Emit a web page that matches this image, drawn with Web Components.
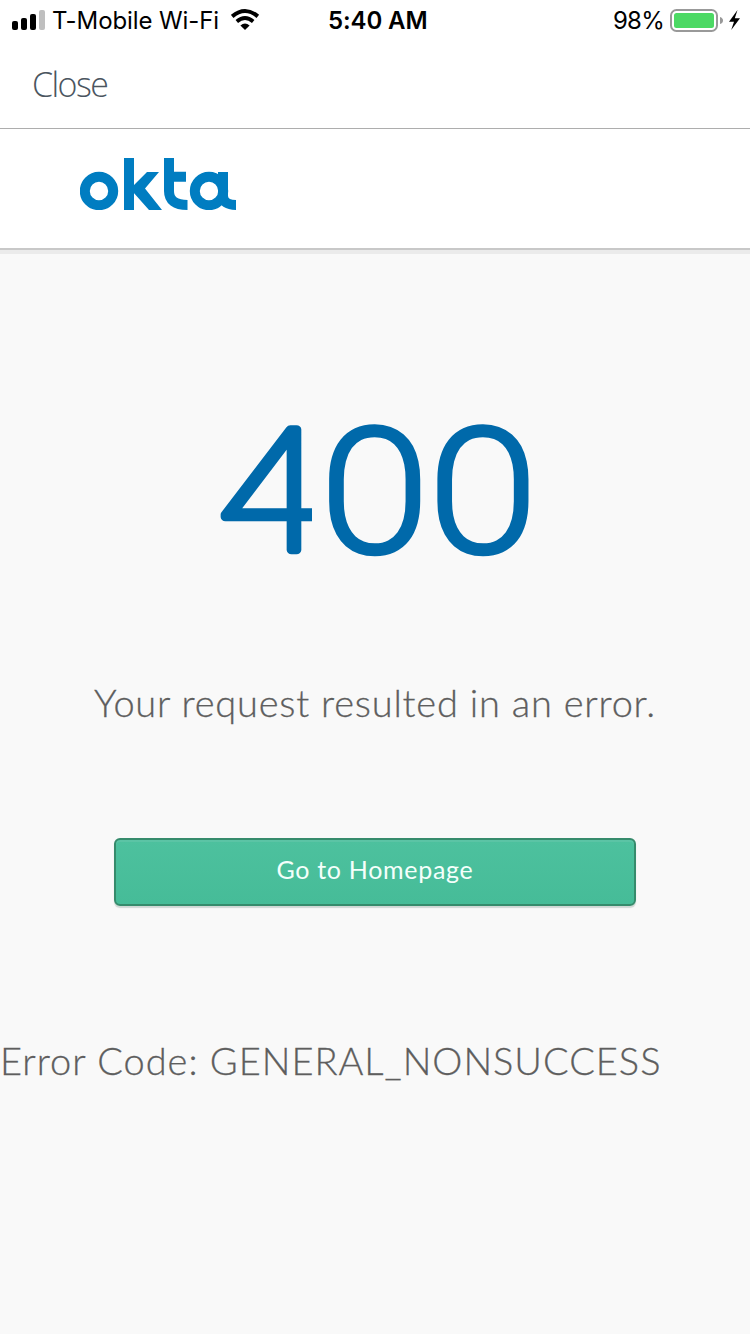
<!DOCTYPE html>
<html lang="en">
<head>
<meta charset="utf-8">
<title>Error 400</title>
<style>
html,body{margin:0;height:100%;background:#f9f9f9}
</style>
</head>
<body>
<error-screen></error-screen>
<script>
const define = (name, html) => customElements.define(name, class extends HTMLElement {
  constructor() {
    super();
    this.attachShadow({mode: 'open'}).innerHTML = html;
  }
});

define('status-bar', `<style>
:host{display:grid;grid-template-columns:328px 285px 1fr;height:40px;background:#fff;color:#000;font:24px/42px Inter,sans-serif;white-space:nowrap}
div{display:flex;height:40px}
svg{display:block;flex:none}
.carrier{letter-spacing:-.1px;margin-left:6px;width:179px}
.time{font-weight:600;letter-spacing:-.1px}
.pct{width:57px;letter-spacing:-.8px}
</style>
<div><svg width="46" height="40"><g><rect x="12" y="21" width="6" height="9" rx="2"/><rect x="21" y="18" width="6" height="12" rx="2"/><rect x="30" y="14" width="6" height="16" rx="2"/><rect x="39" y="10" width="6" height="20" rx="2" fill="#bfbfbf"/></g></svg>
<span class="carrier">T-Mobile Wi-Fi</span>
<svg width="30" height="40" fill="none" stroke="#000"><path d="M1.2 16.4Q14 5.6 26.8 16.4" stroke-width="4"/><path d="M5.8 21.5Q14 14.6 22.2 21.5" stroke-width="3.8"/><path d="M9.4 25.5Q14 21.7 18.6 25.5L14 30Z" fill="#000" stroke="none"/></svg></div>
<div class="time">5:40 AM</div>
<div><span class="pct">98%</span><svg width="80" height="40"><rect x="1" y="10" width="46" height="21" rx="5.5" fill="#fff" stroke="#999" stroke-width="2"/><rect x="4" y="13" width="40" height="15" rx="2.5" fill="#4cd964"/><path d="M50 17Q53 18 53 20.5Q53 23 50 24Z" fill="#999"/><path d="M67.5 10L59 21.7H64L61.2 30L70 18.2H64.8Z"/></svg></div>`);

define('nav-bar', `<style>
:host{display:flex;box-sizing:border-box;height:89px;padding-left:32px;background:#fff;border-bottom:1px solid #adadad;color:#4b5560;font:300 34px/88px "Open Sans","Noto Sans",sans-serif;letter-spacing:-1.6px}
</style><slot></slot>`);

define('okta-logo', `<style>:host{display:block}svg{display:block}</style>
<svg width="156" height="52" role="img" aria-label="okta" fill="none" stroke="#007dc1" stroke-width="10">
<circle cx="19" cy="33" r="14.2"/>
<path d="M49 0V52"/>
<path d="M53 28L67 14H79L65 30.5L82 52H69L53 34Z" fill="#007dc1" stroke="none"/>
<path d="M89 0V33Q89 47 107.5 47M89 18.8H106"/>
<circle cx="129" cy="33" r="14.2"/><path d="M143 14V38Q143 47 156 47"/>
</svg>`);

define('site-header', `<style>
:host{display:block;box-sizing:border-box;height:125px;padding:29px 0 0 80px;background:#fff;border-bottom:4px solid #ebebeb;box-shadow:inset 0 -2px #c8c8c8}
</style><slot></slot>`);

define('error-number', `<style>
:host{display:block}svg{display:block;margin:0 auto}
text{font:100 168px Roboto,sans-serif;fill:#0069aa;stroke:#0069aa;stroke-width:8.4px;stroke-linejoin:round}
</style><svg width="420" height="234"><clipPath id="gap"><path d="M0 0H147V234H0ZM161 0H420V234H161Z"/></clipPath><g clip-path="url(#gap)"><g transform="translate(55 50) scale(1.14 1)"><text x="-2 89.8 184.7" y="126.5">400</text></g></g></svg>`);

define('home-button', `<style>
:host{display:block}
button{display:block;box-sizing:border-box;width:522px;height:68px;margin:0 auto;padding:0 0 7px;border:2px solid #368b6c;border-radius:6px;background:linear-gradient(#4dc19e,#46bc98);box-shadow:inset 0 2px #5bc4a5,0 2px 1px #d0d8d5;color:#f4fffb;font:25px Lato,sans-serif;letter-spacing:.7px}
</style><button><slot></slot></button>`);

define('error-text', `<style>
:host{display:block;color:#5e5e5e;font:300 38px/50px Lato,sans-serif;white-space:nowrap;letter-spacing:.78px;-webkit-text-stroke:.3px #5e5e5e}
:host([center]){text-align:center}
</style><slot></slot>`);

define('error-screen', `<style>
:host{display:flex;flex-direction:column;min-height:1334px;background:#f9f9f9}
main{display:flex;flex-direction:column;padding-top:119px}
.msg{margin-top:70px}home-button{margin-top:111px}.code{margin-top:129px;letter-spacing:.98px}
</style>
<status-bar></status-bar><nav-bar>Close</nav-bar><site-header><okta-logo></okta-logo></site-header>
<main><error-number></error-number><error-text class="msg" center>Your request resulted in an error.</error-text>
<home-button>Go to Homepage</home-button>
<error-text class="code">Error Code: GENERAL_NONSUCCESS</error-text></main>`);
</script>
</body>
</html>
